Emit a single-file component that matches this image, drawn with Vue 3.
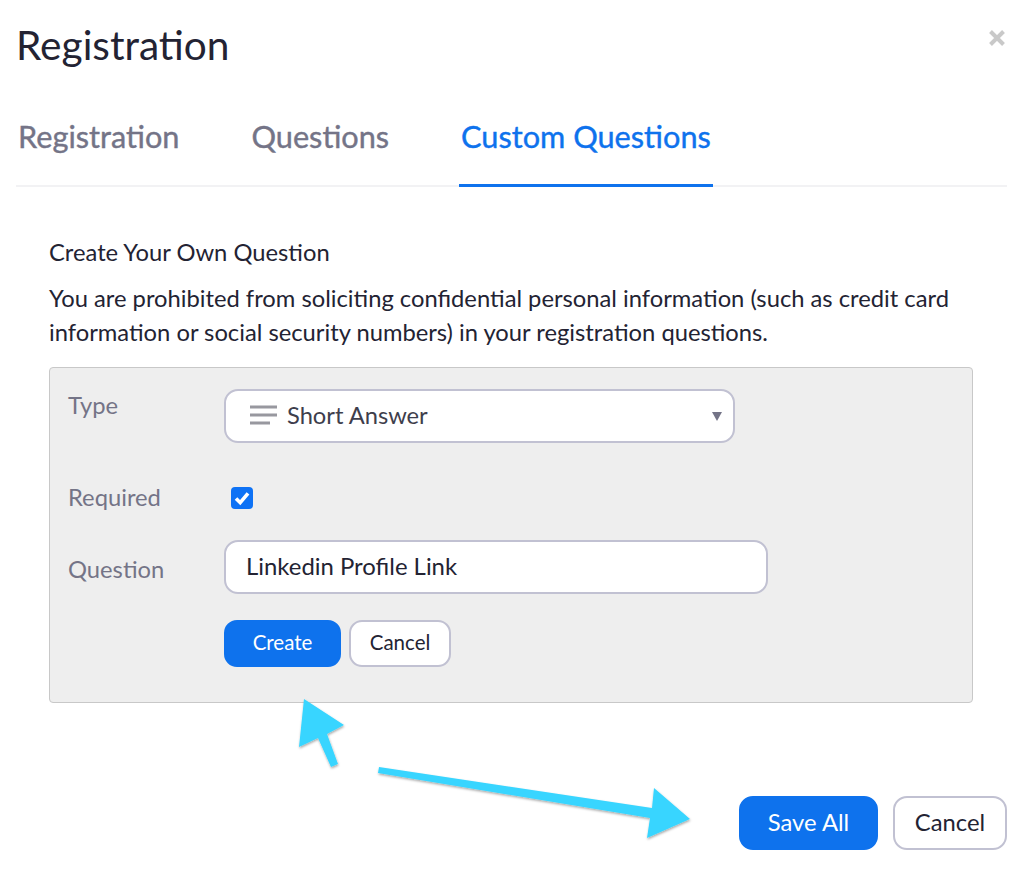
<script setup>
const tabs = [
  { label: "Registration", active: false },
  { label: "Questions", active: false },
  { label: "Custom Questions", active: true },
];
</script>

<template>
  <div class="dialog">
    <header class="head">
      <h1>Registration</h1>
      <svg class="close" width="18" height="18" viewBox="0 0 18 18">
        <path d="M2.5 2.5l13 13M15.5 2.5l-13 13" fill="none" stroke="#c9c9c9" stroke-width="4" />
      </svg>
    </header>

    <nav class="tabs">
      <a v-for="tab in tabs" :key="tab.label" class="tab" :class="{ active: tab.active }">{{ tab.label }}</a>
    </nav>

    <section class="content">
      <p class="lead">Create Your Own Question</p>
      <p class="notice">You are prohibited from soliciting confidential personal information (such as credit card information or social security numbers) in your registration questions.</p>

      <div class="panel">
        <div class="row row-type">
          <label class="label">Type</label>
          <div class="select">
            <svg width="28" height="20" viewBox="0 0 28 20">
              <path d="M0 2h27M0 10h27M0 18h20" fill="none" stroke="#98989f" stroke-width="3" />
            </svg>
            <span>Short Answer</span>
            <i class="caret"></i>
          </div>
        </div>

        <div class="row row-required">
          <label class="label">Required</label>
          <span class="check">
            <svg width="22" height="22" viewBox="0 0 22 22">
              <path d="M5 11.5l4.2 4.2L17 6.3" fill="none" stroke="#fff" stroke-width="3.6" />
            </svg>
          </span>
        </div>

        <div class="row row-question">
          <label class="label">Question</label>
          <input class="input" value="Linkedin Profile Link" />
        </div>

        <div class="actions">
          <button class="btn primary">Create</button>
          <button class="btn">Cancel</button>
        </div>
      </div>
    </section>

    <footer class="foot">
      <button class="btn large primary">Save All</button>
      <button class="btn large">Cancel</button>
    </footer>

    <svg class="arrows" width="1024" height="881" viewBox="0 0 1024 881">
      <defs>
        <filter id="shade" x="-10%" y="-10%" width="120%" height="130%">
          <feDropShadow dx="0.5" dy="1.5" stdDeviation="1.2" flood-color="#000" flood-opacity="0.35" />
        </filter>
      </defs>
      <g fill="#38d5ff" filter="url(#shade)">
        <polygon points="304,699 344,725 327,734 338,764 331,767 318,738 299,747" />
        <polygon points="379,767 652,808 654,788 690,819 647,838 650,818 378,773" />
      </g>
    </svg>
  </div>
</template>

<style scoped>
.dialog {
  position: relative;
  width: 1024px;
  height: 881px;
  box-sizing: border-box;
  padding: 0 17px 0 16px;
  background: #fff;
  font-family: Lato, "Open Sans", sans-serif;
  color: #232333;
  overflow: hidden;
}

.head {
  display: flex;
  justify-content: space-between;
  align-items: center;
  height: 90px;
}

h1 {
  margin: -1px 0 0;
  font-size: 40.6px;
  font-weight: 400;
}

.close {
  margin: -15px 1px 0 0;
}

.tabs {
  display: flex;
  gap: 72px;
  height: 97px;
  padding-left: 2px;
  border-bottom: 2px solid #f2f2f4;
  box-sizing: border-box;
}

.tab {
  height: 97px;
  box-sizing: border-box;
  padding: 26px 2px 0;
  margin: 0 -2px;
  font-size: 30.7px;
  line-height: 42px;
  -webkit-text-stroke: 0.4px currentColor;
  color: #747487;
}

.tab.active {
  color: #0e72ed;
  border-bottom: 3px solid #0e72ed;
}

.content {
  padding: 0 34px 0 33px;
}

.lead {
  margin: 48px 0 0;
  font-size: 23.75px;
  line-height: 34px;
}

.notice {
  margin: 12px 0 0;
  font-size: 23.75px;
  line-height: 34px;
}

.panel {
  margin-top: 18px;
  height: 336px;
  box-sizing: border-box;
  padding: 21px 18px 0;
  background: #eeeeee;
  border: 1px solid #c8c8c8;
  border-radius: 4px;
}

.row {
  display: flex;
}

.label {
  width: 156px;
  font-size: 23.75px;
  line-height: 34px;
  color: #747487;
}

.row-type .label {
  margin-top: -1px;
}

.select {
  display: flex;
  align-items: center;
  gap: 9px;
  width: 511px;
  height: 54px;
  box-sizing: border-box;
  padding: 0 11px 2px 24px;
  background: #fff;
  border: 2px solid #c1c1d2;
  border-radius: 14px;
  font-size: 23.7px;
  color: #3e3e4c;
}

.caret {
  margin: 2px 0 0 auto;
  width: 0;
  height: 0;
  border-left: 5px solid transparent;
  border-right: 5px solid transparent;
  border-top: 9px solid #747487;
}

.row-required {
  margin-top: 37px;
  align-items: center;
  height: 34px;
}

.check {
  display: block;
  width: 22px;
  height: 22px;
  margin: 2px 0 0 7px;
  background: #0e72f5;
  border-radius: 4px;
}

.check svg {
  display: block;
}

.row-question {
  margin-top: 26px;
  align-items: center;
}

.row-question .label {
  padding-top: 3px;
}

.input {
  width: 544px;
  height: 54px;
  box-sizing: border-box;
  padding: 0 20px 3px;
  background: #fff;
  border: 2px solid #c1c1d2;
  border-radius: 14px;
  font: 400 23.9px Lato, "Open Sans", sans-serif;
  color: #232333;
  outline: none;
}

.actions {
  display: flex;
  gap: 8px;
  margin: 26px 0 0 156px;
}

.btn {
  height: 47px;
  width: 102px;
  box-sizing: border-box;
  background: #fff;
  border: 2px solid #c1c1d2;
  border-radius: 13px;
  font: 400 20.5px Lato, "Open Sans", sans-serif;
  color: #232333;
  padding: 0 0 3px;
}

.btn.primary {
  width: 117px;
  background: #0e72ed;
  border-color: #0e72ed;
  color: #fff;
}

.foot {
  display: flex;
  justify-content: flex-end;
  gap: 15px;
  margin-top: 93px;
}

.btn.large {
  width: 114px;
  height: 54px;
  border-radius: 14px;
  font-size: 23.8px;
}

.btn.large.primary {
  width: 139px;
}

.arrows {
  position: absolute;
  left: 0;
  top: 0;
  pointer-events: none;
}
</style>
